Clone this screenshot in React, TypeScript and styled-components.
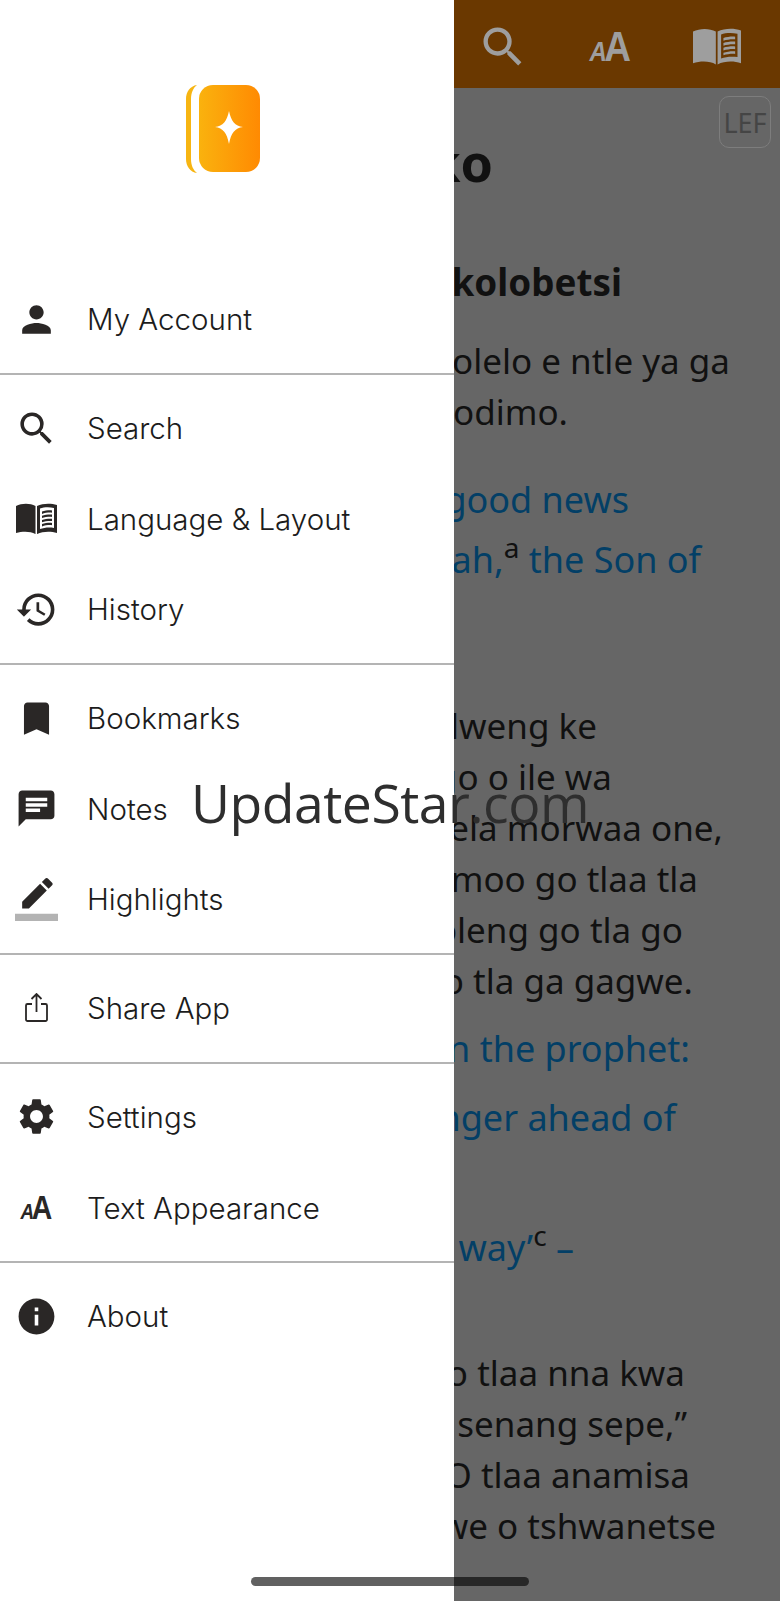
import styled, { createGlobalStyle } from "styled-components";
import type { ReactNode } from "react";
import { MdBookmark, MdChat, MdHistory, MdInfo, MdPerson, MdSearch, MdSettings } from "react-icons/md";

const GlobalStyle = createGlobalStyle`
  html, body {
    margin: 0;
    padding: 0;
    background: #666;
  }
`;

const Screen = styled.div`
  position: relative;
  width: 780px;
  height: 1601px;
  overflow: hidden;
  background: #666;
`;

const Toolbar = styled.header`
  display: flex;
  justify-content: flex-end;
  align-items: center;
  gap: 55px;
  height: 88px;
  padding: 5px 37px 0 0;
  box-sizing: border-box;
  background: #6a3800;
  color: #9e9e9e;
  font-size: 52px;
`;

const ToolSlot = styled.div`
  display: flex;
  justify-content: center;
  align-items: center;
  width: 52px;
  height: 52px;
`;

const LayoutButton = styled.div`
  position: absolute;
  top: 96px;
  right: 9px;
  display: flex;
  justify-content: center;
  align-items: center;
  width: 52px;
  height: 52px;
  box-sizing: border-box;
  border: 1px solid #7d7d7d;
  border-radius: 10px;
  color: #454545;
  font: 400 27px "Noto Sans", sans-serif;
`;

const Reader = styled.main`
  display: flex;
  flex-direction: column;
  font-family: "Noto Sans", sans-serif;
  color: #111;
`;

const Title = styled.h1`
  display: flex;
  justify-content: flex-end;
  margin: 44px 287px 0 0;
  font-size: 52px;
  font-weight: 700;
  line-height: 60px;
  white-space: nowrap;
`;

const Subhead = styled.h2`
  display: flex;
  justify-content: flex-end;
  margin: 65px 158px 0 0;
  font-size: 36.8px;
  font-weight: 700;
  line-height: 50px;
  white-space: nowrap;
`;

const Passage = styled.div<{ $top: number }>`
  margin-top: ${({ $top }) => $top}px;
`;

const Line = styled.div<{ $inset: number; $top?: number; $link?: boolean }>`
  margin: ${({ $top }) => $top ?? 0}px ${({ $inset }) => $inset}px 0 0;
  font-size: ${({ $link }) => ($link ? 36 : 35)}px;
  line-height: 51px;
  text-align: right;
  white-space: nowrap;
  color: ${({ $link }) => ($link ? "#033f66" : "#111")};
`;

const Note = styled.sup`
  font-size: 28px;
  line-height: 0;
  vertical-align: 15px;
  color: #111;
`;

const Drawer = styled.nav`
  position: absolute;
  top: 0;
  left: 0;
  bottom: 0;
  width: 454px;
  background: #fff;
  font-family: Inter, "Liberation Sans", sans-serif;
`;

const Brand = styled.div`
  display: flex;
  justify-content: center;
  height: 266px;
  padding: 85px 8px 0 0;
  box-sizing: border-box;
`;

const Section = styled.section<{ $last?: boolean }>`
  padding: 8px 0;
  border-bottom: ${({ $last }) => ($last ? "none" : "2px solid #b4b4b4")};
`;

const Row = styled.div`
  display: flex;
  align-items: center;
  gap: 29px;
  height: 90.7px;
  padding-left: 15px;
  color: #2a2726;
  font-size: 43px;
`;

const Label = styled.span`
  font-size: 29.5px;
  font-weight: 350;
  color: #1c1c1c;
`;

const IconSlot = styled.div`
  display: flex;
  flex: none;
  justify-content: center;
  align-items: center;
  width: 43px;
  height: 43px;
`;

const Letters = styled.span<{ $big: number; $small: number }>`
  display: inline-flex;
  align-items: baseline;
  font-family: "Liberation Sans", sans-serif;
  font-weight: 700;
  font-size: ${({ $big }) => $big}px;
  line-height: 1;
  transform: scaleX(0.86);

  i {
    font-size: ${({ $small }) => $small}px;
    margin-right: -3px;
  }
`;

const Watermark = styled.div`
  position: absolute;
  top: 765px;
  left: 191px;
  font: 400 53.5px/76px "Open Sans", sans-serif;
  letter-spacing: -0.48px;
  color: #2e2e2e;
  white-space: nowrap;
`;

const HomeBar = styled.div`
  position: absolute;
  top: 1577px;
  left: 251px;
  width: 278px;
  height: 9px;
  border-radius: 5px;
  background: rgba(0, 0, 0, 0.62);
`;

const Logo = () => (
  <svg width="74" height="88" viewBox="0 0 74 88">
    <defs>
      <linearGradient id="cover" x1="0" x2="1" y1="0" y2="0">
        <stop offset="0" stopColor="#fab20e" />
        <stop offset="1" stopColor="#ff8a02" />
      </linearGradient>
    </defs>
    <path d="M11 0C4 1 0 7 0 14v60c0 7 4 13 11 14C7 85 5 80 5 74V14C5 8 7 3 11 0z" fill="#f7b512" />
    <rect x="13" width="61" height="87" rx="14" fill="url(#cover)" />
    <path d="M43 26C45 36 49 41 57 42 49 43 45 48 43 59 41 48 37 43 29 42 37 41 41 36 43 26z" fill="#fff" />
  </svg>
);

const BookIcon = ({ width }: { width: number }) => (
  <svg width={width} height={width * 0.76} viewBox="0 0 41 31" fill="currentColor">
    <path d="M0 3c6-3 14-3 19.500 0v28c-5-3-13-3-19.500-1z" />
    <path
      fillRule="evenodd"
      d="M21 3c6-3 14-3 20-1v28c-6-2-14-2-20 1zM24 5.500v20.500c4-1.500 9-2 14-1.200V4.800c-5-.8-10-.8-14 .7z"
    />
    <path d="M26 8.500c3-1 7-1.500 10-1.200v2.300c-3-.3-7 .2-10 1.200zM26 12.700c3-1 7-1.500 10-1.200v2.300c-3-.3-7 .2-10 1.200zM26 16.900c3-1 7-1.500 10-1.200V18c-3-.3-7 .2-10 1.200zM26 21c3-1 7-1.500 10-1.200v2.300c-3-.3-7 .2-10 1.200z" />
  </svg>
);

const PencilIcon = () => (
  <svg width="43" height="43" viewBox="0 0 24 24">
    <path
      d="M17.750 7 14 3.250l-10 10V17h3.750l10-10zm2.960-2.960c.39-.39.39-1.020 0-1.410L18.370.29c-.39-.39-1.020-.39-1.410 0L15 2.250 18.750 6l1.960-1.960z"
      fill="currentColor"
    />
    <path d="M0 20h24v4H0z" fill="#b3b3b3" />
  </svg>
);

const ShareIcon = () => (
  <svg width="23" height="30" viewBox="0 0 23 30" fill="none" stroke="currentColor" strokeWidth="1.800">
    <path d="M7 11H2.500A1.500 1.500 0 0 0 1 12.500v14A1.500 1.500 0 0 0 2.500 28h18a1.500 1.500 0 0 0 1.500-1.500v-14a1.500 1.500 0 0 0-1.500-1.500H16" />
    <path d="M11.500 19V1M6.500 6l5-5 5 5" />
  </svg>
);

const SECTIONS: { icon: ReactNode; label: string }[][] = [
  [{ icon: <MdPerson />, label: "My Account" }],
  [
    { icon: <MdSearch />, label: "Search" },
    { icon: <BookIcon width={41} />, label: "Language & Layout" },
    { icon: <MdHistory />, label: "History" },
  ],
  [
    { icon: <MdBookmark />, label: "Bookmarks" },
    { icon: <MdChat />, label: "Notes" },
    { icon: <PencilIcon />, label: "Highlights" },
  ],
  [{ icon: <ShareIcon />, label: "Share App" }],
  [
    { icon: <MdSettings />, label: "Settings" },
    {
      icon: (
        <Letters $big={33} $small={22}>
          <i>A</i>A
        </Letters>
      ),
      label: "Text Appearance",
    },
  ],
  [{ icon: <MdInfo />, label: "About" }],
];

export default function App() {
  return (
    <Screen>
      <GlobalStyle />
      <Toolbar>
        <ToolSlot>
          <MdSearch />
        </ToolSlot>
        <ToolSlot>
          <Letters $big={43} $small={28}>
            <i>A</i>A
          </Letters>
        </ToolSlot>
        <ToolSlot>
          <BookIcon width={48} />
        </ToolSlot>
      </Toolbar>
      <LayoutButton>LEF</LayoutButton>

      <Reader>
        <Title>Mareko</Title>
        <Subhead>Johane Mokolobetsi</Subhead>
        <Passage $top={28}>
          <Line $inset={50}>Polelo e ntle ya ga</Line>
          <Line $inset={212}>Modimo.</Line>
        </Passage>
        <Passage $top={37}>
          <Line $inset={151} $link>
            the good news
          </Line>
          <Line $inset={79} $top={9} $link>
            Messiah,<Note>a</Note> the Son of
          </Line>
        </Passage>
        <Passage $top={115}>
          <Line $inset={183}>kwadilweng ke</Line>
          <Line $inset={168}>Isaia go o ile wa</Line>
          <Line $inset={57}>Tlhokomela morwaa one,</Line>
          <Line $inset={82}>Morongwa moo go tlaa tla</Line>
          <Line $inset={97}>pele ga gagoleng go tla go</Line>
          <Line $inset={87}>Ya gago o tla ga gagwe.</Line>
        </Passage>
        <Passage $top={17}>
          <Line $inset={90} $link>
            written in the prophet:
          </Line>
          <Line $inset={104} $top={18} $link>
            my messenger ahead of
          </Line>
          <Line $inset={206} $top={79} $link>
            ‘Prepare the way’<Note>c</Note> –
          </Line>
        </Passage>
        <Passage $top={74}>
          <Line $inset={95}>Lentswe le tlo tlaa nna kwa</Line>
          <Line $inset={93}>Tsela tsa gagwe senang sepe,”</Line>
          <Line $inset={90}>Mme MOROD O tlaa anamisa</Line>
          <Line $inset={64}>Mongwe le mongwe o tshwanetse</Line>
        </Passage>
      </Reader>

      <Drawer>
        <Brand>
          <Logo />
        </Brand>
        {SECTIONS.map((rows, index) => (
          <Section key={rows[0].label} $last={index === SECTIONS.length - 1}>
            {rows.map((row) => (
              <Row key={row.label}>
                <IconSlot>{row.icon}</IconSlot>
                <Label>{row.label}</Label>
              </Row>
            ))}
          </Section>
        ))}
      </Drawer>

      <Watermark>UpdateStar.com</Watermark>
      <HomeBar />
    </Screen>
  );
}
